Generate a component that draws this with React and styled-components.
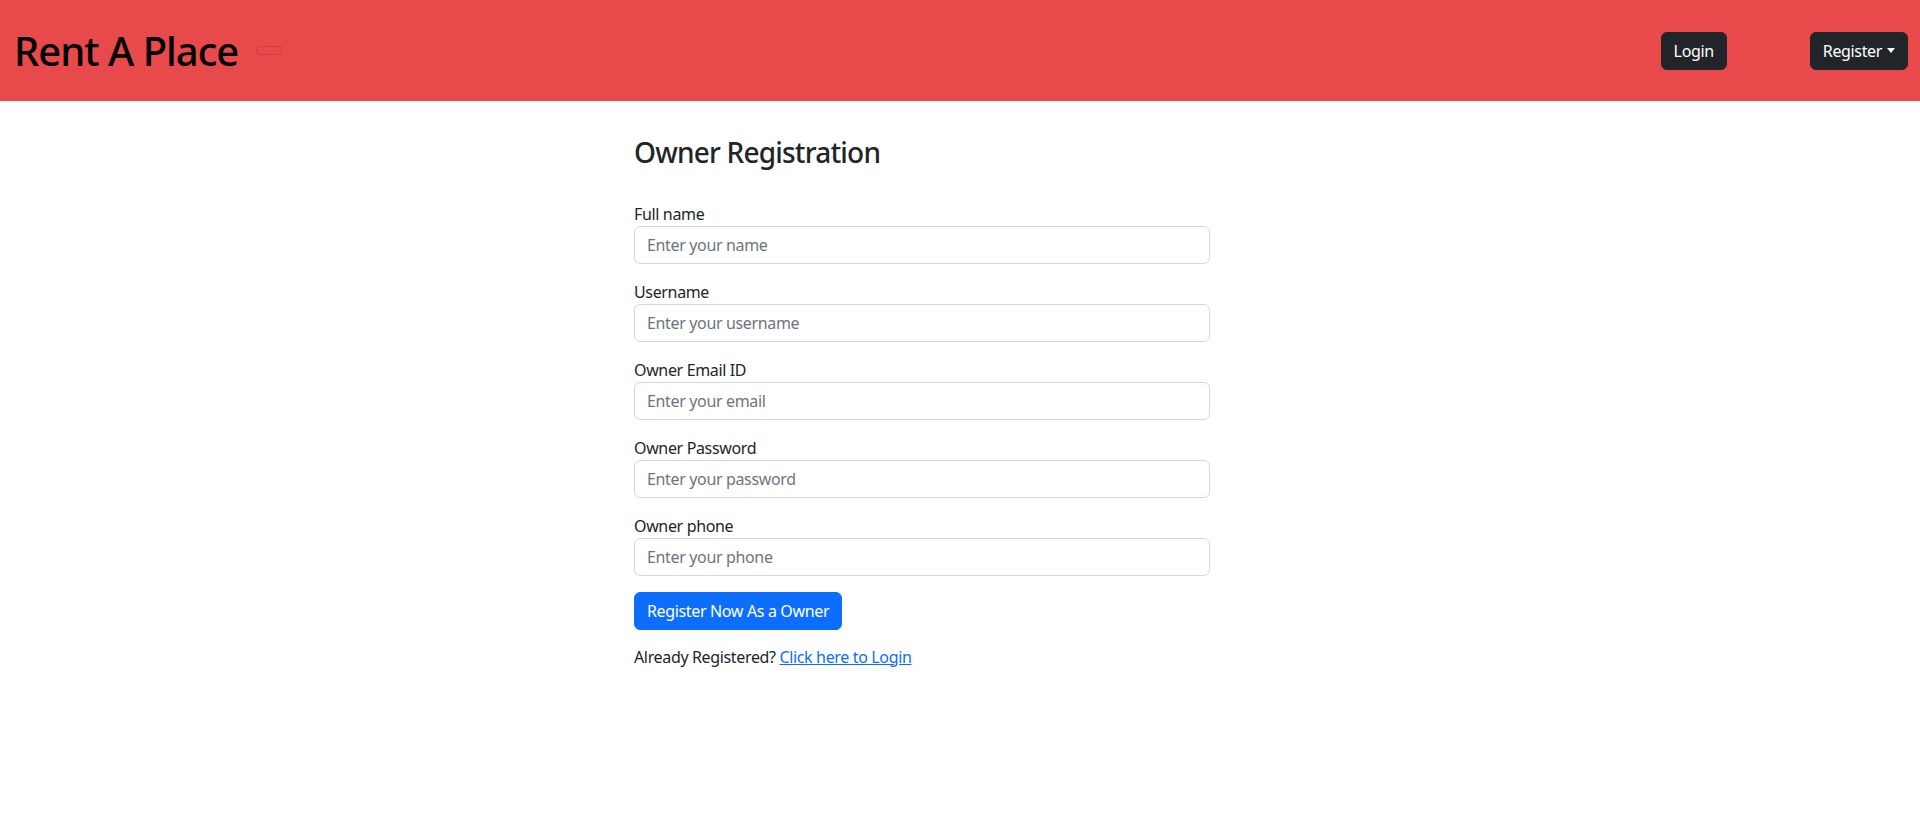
import styled, { createGlobalStyle } from "styled-components";

const GlobalStyle = createGlobalStyle`
  * {
    box-sizing: border-box;
  }

  body {
    margin: 0;
    background: #fff;
    color: #212529;
    font-family: "Noto Sans", "Open Sans", Arial, sans-serif;
    font-size: 16px;
    line-height: 1.5;
    letter-spacing: -0.35px;
  }

  button,
  input {
    letter-spacing: inherit;
  }
`;

const NavBar = styled.nav`
  height: 101px;
  background-color: #e84a4b;
  display: flex;
  align-items: center;
  padding: 0 12px 0 14px;
`;

const Brand = styled.h1`
  margin: 0;
  font-size: 40px;
  font-weight: 500;
  line-height: 1.2;
  color: #000;
  letter-spacing: -1px;
`;

const Toggler = styled.button`
  margin-left: 18px;
  width: 26px;
  height: 9px;
  padding: 0;
  border: 1px solid rgba(0, 0, 0, 0.12);
  border-radius: 6px;
  background: transparent;
`;

const NavActions = styled.div`
  margin-left: auto;
  display: flex;
  align-items: center;
  gap: 83px;
`;

const DarkButton = styled.button`
  height: 38px;
  padding: 0 12px;
  border: 1px solid #212529;
  border-radius: 6px;
  background-color: #212529;
  color: #fff;
  font-family: inherit;
  font-size: 16px;
  display: inline-flex;
  align-items: center;
  cursor: pointer;
`;

const Caret = styled.span`
  display: inline-block;
  margin-left: 5px;
  border-top: 5px solid #fff;
  border-left: 4px solid transparent;
  border-right: 4px solid transparent;
`;

const Main = styled.main`
  padding: 35px 0 0 634px;
`;

const Form = styled.form`
  width: 576px;
`;

const Title = styled.h2`
  margin: 0 0 32px;
  font-size: 28px;
  font-weight: 500;
  line-height: 1.2;
  letter-spacing: -0.8px;
`;

const Field = styled.div`
  margin-bottom: 16px;
`;

const Label = styled.label`
  display: block;
  font-size: 16px;
  line-height: 24px;
`;

const Input = styled.input`
  display: block;
  width: 100%;
  height: 38px;
  padding: 6px 12px;
  border: 1px solid #d4d7db;
  border-radius: 6px;
  font-family: inherit;
  font-size: 16px;
  color: #212529;

  &::placeholder {
    color: #6c757d;
  }
`;

const PrimaryButton = styled.button`
  height: 38px;
  padding: 0 12px;
  border: 1px solid #0d6efd;
  border-radius: 6px;
  background-color: #0d6efd;
  color: #fff;
  font-family: inherit;
  font-size: 16px;
  cursor: pointer;
`;

const Note = styled.p`
  margin: 15px 0 0;
  line-height: 24px;
`;

const Link = styled.a`
  color: #0d6efd;
  text-decoration: underline;
`;

const fields = [
  { label: "Full name", placeholder: "Enter your name", type: "text" },
  { label: "Username", placeholder: "Enter your username", type: "text" },
  { label: "Owner Email ID", placeholder: "Enter your email", type: "email" },
  { label: "Owner Password", placeholder: "Enter your password", type: "password" },
  { label: "Owner phone", placeholder: "Enter your phone", type: "text" },
];

const App = () => {
  return (
    <>
      <GlobalStyle />
      <NavBar>
        <Brand>Rent A Place</Brand>
        <Toggler type="button" />
        <NavActions>
          <DarkButton>Login</DarkButton>
          <DarkButton>
            Register
            <Caret />
          </DarkButton>
        </NavActions>
      </NavBar>

      <Main>
        <Form onSubmit={(e) => e.preventDefault()}>
          <Title>Owner Registration</Title>
          {fields.map((field) => (
            <Field key={field.label}>
              <Label>{field.label}</Label>
              <Input type={field.type} placeholder={field.placeholder} />
            </Field>
          ))}
          <PrimaryButton type="submit">Register Now As a Owner</PrimaryButton>
          <Note>
            Already Registered? <Link href="#">Click here to Login</Link>
          </Note>
        </Form>
      </Main>
    </>
  );
};

export default App;
